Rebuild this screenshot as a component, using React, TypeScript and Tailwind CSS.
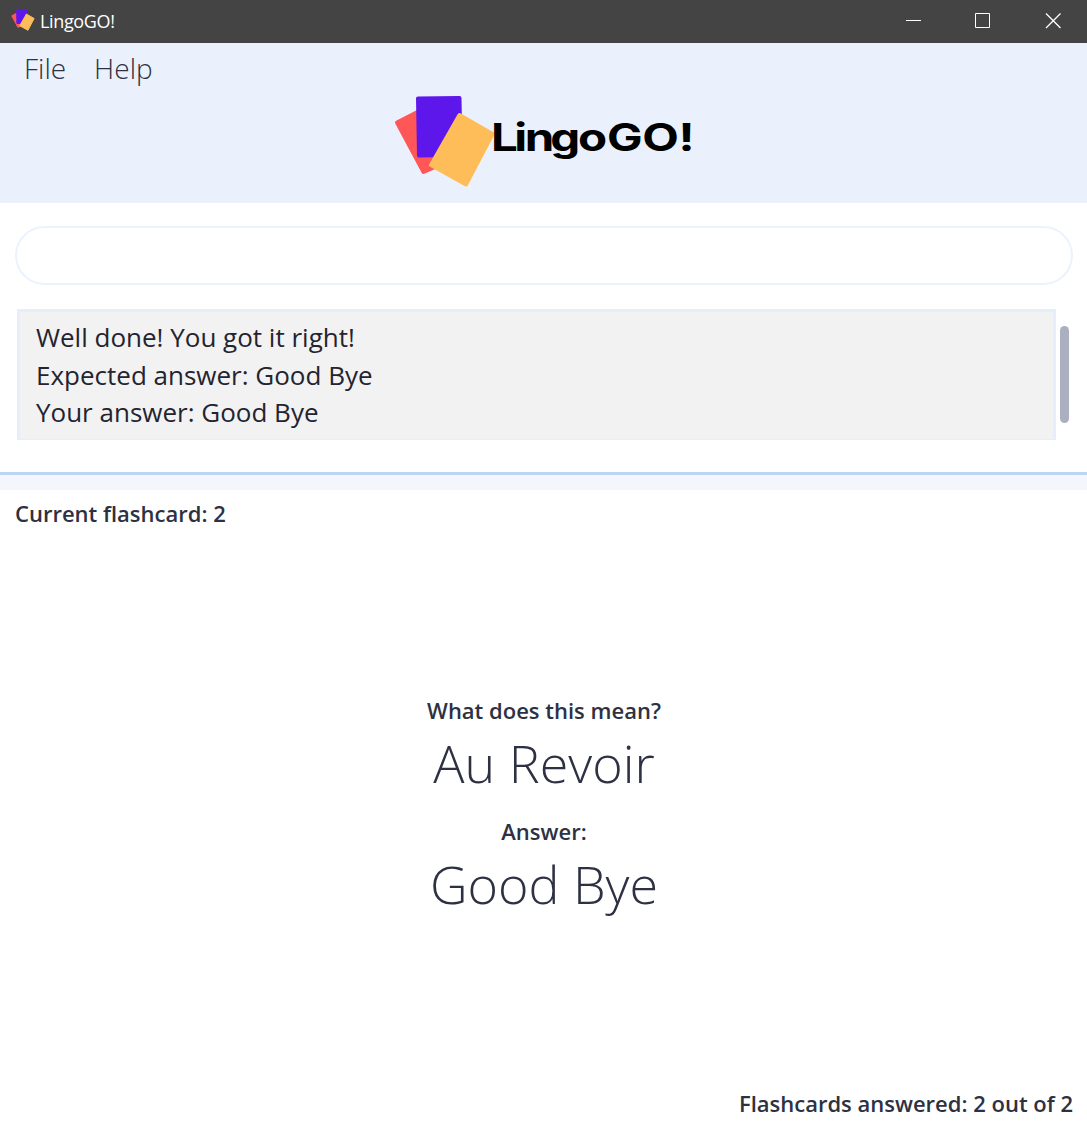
import React from "react";

function Cards({ className }: { className: string }) {
  return (
    <svg viewBox="0 0 102 93" className={className} strokeWidth="4" strokeLinejoin="round">
      <path d="M3 28.5 41 9 69 61 29.5 78Z" fill="#ff5757" stroke="#ff5757" />
      <path d="M24 4.5 65.5 4 66.5 61 25 61.500Z" fill="#5e17eb" stroke="#5e17eb" />
      <path d="M65.500 21 98.500 40 72 90.500 37 71Z" fill="#ffbd59" stroke="#ffbd59" />
    </svg>
  );
}

function TitleBar() {
  return (
    <header className="flex h-[43px] items-center bg-[#444444] pl-[11px] text-white">
      <Cards className="-mt-[3px] h-[22px] w-[24px]" />
      <span className="-mt-[1px] ml-[5px] font-['Open_Sans'] text-[18px] leading-[24px] tracking-[-0.35px]">LingoGO!</span>
      <div className="ml-auto flex h-full">
        <svg width="208" height="43" fill="none" stroke="white">
          <path d="M27 20.500H42M96.500 13.500H110.500V27.500H96.500Z" />
          <path d="M167 13.500 181.500 28M181.500 13.500 167 28" strokeWidth="1.300" />
        </svg>
      </div>
    </header>
  );
}

export default function App() {
  return (
    <div className="flex h-[1125px] w-[1087px] flex-col overflow-hidden bg-white font-['Open_Sans',sans-serif] text-[#2d3142]">
      <TitleBar />
      <section className="h-[160px] bg-[#eaf1fc]">
        <nav className="flex h-[51px] gap-[28px] pl-[24px] pt-[5px] text-[28px] font-light leading-[40px]">
          <span>File</span>
          <span>Help</span>
        </nav>
        <div className="flex pl-[394px]">
          <Cards className="h-[93px] w-[102px] shrink-0" />
          <svg width="202" height="93" className="-ml-[4px] overflow-visible">
            <text transform="scale(1.25 1)" x="-0.800 17.900 26.200 46.600 68.800 92 120.300 149.300" y="57.500" fontFamily="Inter, sans-serif" fontWeight="700" fontSize="38" fill="#000">LingoGO!</text>
          </svg>
        </div>
      </section>
      <section className="h-[269px] pl-[15px] pr-[14px] pt-[23px]">
        <div className="h-[59px] rounded-full border-2 border-[#eaf3fd]" />
        <div className="mt-[24px] flex">
          <div className="ml-[2px] h-[131px] w-[1039px] border-[3px] border-b border-[#e5eefb] bg-[#f2f2f2] pl-[16px] pt-[7px] text-[26px] leading-[37.500px] text-[#242430]">
            <p>Well done! You got it right!</p>
            <p>Expected answer: Good Bye</p>
            <p>Your answer: Good Bye</p>
          </div>
          <div className="ml-[4px] mt-[17px] h-[97px] w-[9px] rounded-full bg-[#aab0bf]" />
        </div>
      </section>
      <div className="h-[18px] border-t-[3px] border-[#bad6f5] bg-[#f4f6fb]" />
      <main className="flex grow flex-col pl-[15px] pr-[14px] text-[22px] font-semibold leading-[30px]">
        <p className="mt-[8px]">Current flashcard: 2</p>
        <div className="mt-[167px] flex flex-col items-center">
          <p>What does this mean?</p>
          <p className="h-[91px] pt-[3px] text-[52px] font-light leading-[70px]">Au Revoir</p>
          <p>Answer:</p>
          <p className="pt-[3px] text-[52px] font-light leading-[70px]">Good Bye</p>
        </div>
        <p className="mb-[7px] ml-auto mt-auto">Flashcards answered: 2 out of 2</p>
      </main>
    </div>
  );
}
